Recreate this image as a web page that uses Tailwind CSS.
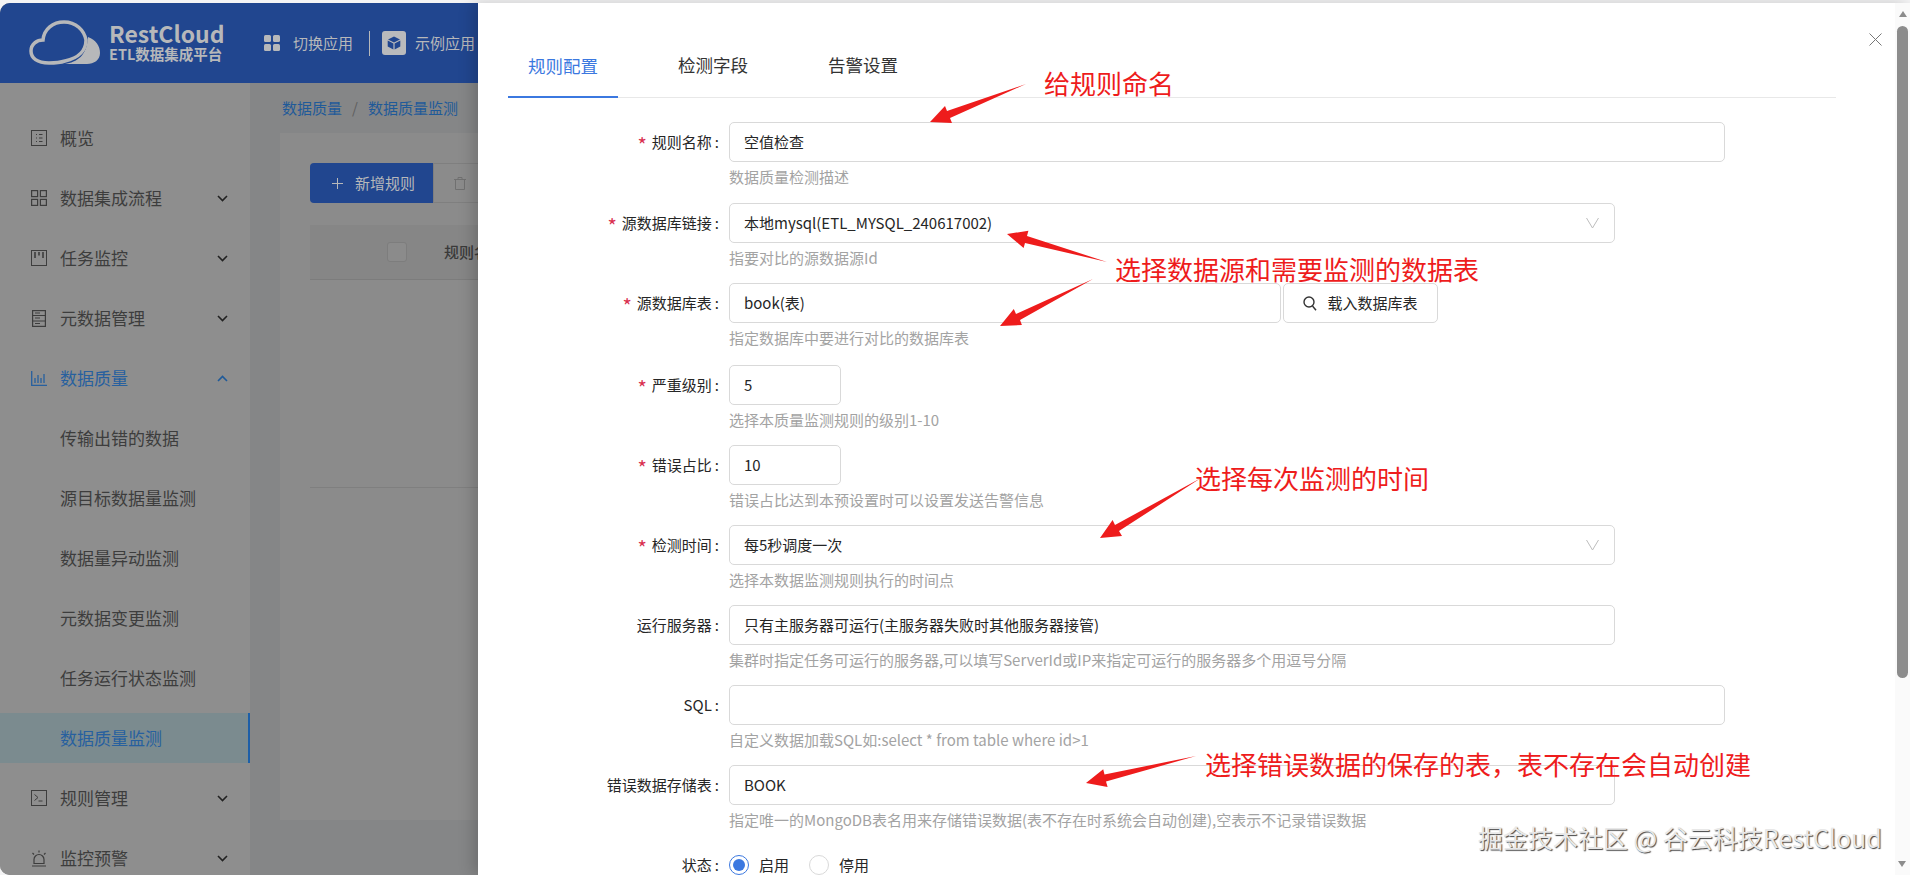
<!DOCTYPE html>
<html lang="zh-CN">
<head>
    <meta charset="UTF-8">
    <title>RestCloud ETL 数据质量监测</title>
    <script src="https://cdn.jsdelivr.net/npm/@tailwindcss/browser@4"></script>
</head>
<body class="bg-white font-['Noto_Sans_CJK_SC','Noto_Sans',sans-serif] overflow-hidden">
<div class="relative w-[1910px] h-[875px] overflow-hidden bg-[#f4f4f5] pt-[3px]">

    <!-- 背景页面(遮罩下) -->
    <div class="h-[872px] flex flex-col rounded-tl-[10px] rounded-bl-[10px] overflow-hidden bg-[#858687]">
        <header class="h-[80px] shrink-0 bg-[#21468f] flex items-center text-[#b7b8ba]">
            <svg class="ml-[29px] w-[72px] h-[46px]" viewBox="0 0 72 46" fill="none">
                <path d="M20 43C8 43 2 38 2 31C2 24 8 20 14 20C15 9 24 2 35 2C47 2 55 10 57 20C57 30 50 38 36 41C30 43 25 43 20 43Z" stroke="#b7b8ba" stroke-width="3.5"/>
                <path d="M59 17C67 20 71 26 71 33C71 40 65 44 58 44L36 44C48 42 58 36 59 17Z" fill="#b7b8ba"/>
            </svg>
            <div class="ml-[8px] w-[120px] -mt-[2px] font-bold">
                <div class="text-[23px] leading-[22px]">RestCloud</div>
                <div class="text-[14.5px] leading-[16px] mt-[2px] whitespace-nowrap">ETL数据集成平台</div>
            </div>
            <svg class="ml-[35px] w-[16px] h-[16px]" viewBox="0 0 16 16" fill="#b7b8ba">
                <rect x="0" y="0" width="7" height="7" rx="1.5"/><rect x="9" y="0" width="7" height="7" rx="1.5"/>
                <rect x="0" y="9" width="7" height="7" rx="1.5"/><rect x="9" y="9" width="7" height="7" rx="1.5"/>
            </svg>
            <span class="ml-[13px] text-[15px]">切换应用</span>
            <div class="ml-[16px] w-px h-[25px] bg-[#b7b8ba]"></div>
            <div class="ml-[12px] w-[24px] h-[24px] rounded-[3px] bg-[#b9babc] flex items-center justify-center">
                <svg class="w-[14px] h-[14px]" viewBox="0 0 14 14" fill="#21468f">
                    <path d="M7 0.5L13 3.5L7 6.5L1 3.5Z"/><path d="M0.7 4.6L6.4 7.4V13.5L0.7 10.6Z"/><path d="M13.3 4.6L7.6 7.4V13.5L13.3 10.6Z"/>
                </svg>
            </div>
            <span class="ml-[9px] text-[15px]">示例应用</span>
        </header>

        <div class="flex-1 flex min-h-0">
            <aside class="w-[250px] shrink-0 bg-[#8e8e8e] pt-[30px] text-[17px] text-[#3d3d3d]">
                <div class="h-[50px] mb-[10px] flex items-center pl-[31px]">
                    <svg class="w-[16px] h-[16px] mr-[13px]" viewBox="0 0 16 16" fill="none" stroke="#3d3d3d"><rect x=".5" y=".5" width="15" height="15"/><path d="M5 4.5h1M5 8h1M5 11.5h1M8 4.5h3.5M8 8h3.5M8 11.5h3.5"/></svg>概览
                </div>
                <div class="h-[50px] mb-[10px] flex items-center pl-[31px]">
                    <svg class="w-[16px] h-[16px] mr-[13px]" viewBox="0 0 16 16" fill="none" stroke="#3d3d3d" stroke-width="1.2"><rect x=".6" y=".6" width="6" height="6"/><rect x="9.4" y=".6" width="6" height="6"/><rect x=".6" y="9.4" width="6" height="6"/><rect x="9.4" y="9.4" width="6" height="6"/></svg>数据集成流程
                    <svg class="ml-auto mr-[22px] w-[11px] h-[7px]" viewBox="0 0 11 7" fill="none" stroke="#222" stroke-width="1.6"><path d="M1 1l4.5 4.5L10 1"/></svg>
                </div>
                <div class="h-[50px] mb-[10px] flex items-center pl-[31px]">
                    <svg class="w-[16px] h-[16px] mr-[13px]" viewBox="0 0 16 16" fill="none" stroke="#3d3d3d"><rect x=".5" y=".5" width="15" height="15"/><path d="M4 2v6M8 2v3.5M12 2v6" stroke-width="1.6"/></svg>任务监控
                    <svg class="ml-auto mr-[22px] w-[11px] h-[7px]" viewBox="0 0 11 7" fill="none" stroke="#222" stroke-width="1.6"><path d="M1 1l4.5 4.5L10 1"/></svg>
                </div>
                <div class="h-[50px] mb-[10px] flex items-center pl-[31px]">
                    <svg class="w-[16px] h-[17px] mr-[13px]" viewBox="0 0 16 17" fill="none" stroke="#3d3d3d" stroke-width="1.2"><rect x="1.6" y=".6" width="12.8" height="15.8"/><path d="M1.6 5.5h12.8M1.6 11h12.8M4 3h5M4 8h5M4 13.5h5"/></svg>元数据管理
                    <svg class="ml-auto mr-[22px] w-[11px] h-[7px]" viewBox="0 0 11 7" fill="none" stroke="#222" stroke-width="1.6"><path d="M1 1l4.5 4.5L10 1"/></svg>
                </div>
                <div class="h-[50px] mb-[10px] flex items-center pl-[31px] text-[#27609f]">
                    <svg class="w-[16px] h-[16px] mr-[13px]" viewBox="0 0 16 16" fill="none" stroke="#27609f" stroke-width="1.3"><path d="M.7 1v14.3H16M4 13V8M7 13V5M10 13V8M13 13V4"/></svg>数据质量
                    <svg class="ml-auto mr-[22px] w-[11px] h-[7px]" viewBox="0 0 11 7" fill="none" stroke="#1f5a99" stroke-width="1.6"><path d="M1 6l4.5-4.5L10 6"/></svg>
                </div>
                <div class="h-[50px] mb-[10px] flex items-center pl-[60px]">传输出错的数据</div>
                <div class="h-[50px] mb-[10px] flex items-center pl-[60px]">源目标数据量监测</div>
                <div class="h-[50px] mb-[10px] flex items-center pl-[60px]">数据量异动监测</div>
                <div class="h-[50px] mb-[10px] flex items-center pl-[60px]">元数据变更监测</div>
                <div class="h-[50px] mb-[10px] flex items-center pl-[60px]">任务运行状态监测</div>
                <div class="h-[50px] mb-[10px] flex items-center pl-[60px] bg-[#7b8b8f] text-[#27609f] border-r-[2px] border-[#1c5fa8]">数据质量监测</div>
                <div class="h-[50px] mb-[10px] flex items-center pl-[31px]">
                    <svg class="w-[16px] h-[16px] mr-[13px]" viewBox="0 0 16 16" fill="none" stroke="#3d3d3d"><rect x=".5" y=".5" width="15" height="15"/><path d="M3.5 4.5L7 7.5L3.5 10.5M7.5 11h4"/></svg>规则管理
                    <svg class="ml-auto mr-[22px] w-[11px] h-[7px]" viewBox="0 0 11 7" fill="none" stroke="#222" stroke-width="1.6"><path d="M1 1l4.5 4.5L10 1"/></svg>
                </div>
                <div class="h-[50px] flex items-center pl-[31px]">
                    <svg class="w-[16px] h-[17px] mr-[13px]" viewBox="0 0 16 17" fill="none" stroke="#3d3d3d" stroke-width="1.2"><path d="M3 14V9.5a5 5 0 0 1 10 0V14M1 16h14M3 13.5h10M8 .5v2M1.5 3l1.5 1.5M14.5 3L13 4.5"/></svg>监控预警
                    <svg class="ml-auto mr-[22px] w-[11px] h-[7px]" viewBox="0 0 11 7" fill="none" stroke="#222" stroke-width="1.6"><path d="M1 1l4.5 4.5L10 1"/></svg>
                </div>
            </aside>

            <main class="flex-1 min-w-0 pl-[30px]">
                <div class="h-[50px] flex items-center pl-[2px] text-[15px] text-[#1f5a99] whitespace-nowrap">
                    数据质量<span class="mx-[10px] text-[#5f5f5f]">/</span>数据质量监测
                </div>
                <section class="h-[687px] bg-[#8b8b8b] pl-[30px] pt-[30px]">
                    <div class="flex h-[40px] whitespace-nowrap">
                        <div class="w-[123px] shrink-0 rounded-l-[4px] bg-[#21468f] text-[#b7b8ba] text-[15px] flex items-center pl-[22px]">
                            <svg class="w-[11px] h-[11px] mr-[12px]" viewBox="0 0 11 11" stroke="#b7b8ba" fill="none"><path d="M5.5 0v11M0 5.5h11"/></svg>新增规则
                        </div>
                        <div class="w-[200px] shrink-0 border border-[#7f7f7f] flex items-center pl-[20px]">
                            <svg class="w-[12px] h-[13px]" viewBox="0 0 12 13" fill="none" stroke="#707070"><path d="M0 2.5h12M4 2.5V.5h4v2M1.5 2.5v10h9v-10"/></svg>
                        </div>
                    </div>
                    <div class="mt-[22px] h-[55px] border-b border-[#7c7c7c] bg-[#868686] flex items-center pl-[77px] text-[15px] text-[#3a3a3a] whitespace-nowrap overflow-hidden">
                        <div class="w-[20px] h-[20px] shrink-0 rounded-[3px] border border-[#7d7d7d] bg-[#8b8b8b]"></div>
                        <span class="ml-[37px] font-medium">规则名称</span>
                    </div>
                    <div class="h-[208px] border-b border-[#7f7f7f]"></div>
                </section>
            </main>
        </div>
    </div>

    <!-- 抽屉 -->
    <div class="absolute left-[478px] right-0 top-[3px] bottom-0 bg-white shadow-[-5px_0_14px_rgba(0,0,0,0.18)] text-[15px] text-[#262626]">
        <div class="ml-[30px] mr-[74px] h-[95px] flex items-end border-b border-[#e8e8e8] text-[17.5px] text-[#333]">
            <div class="w-[110px] h-[95px] pt-[49px] text-center leading-[28px] text-[#3b78e0] border-b-[2px] border-[#3b78e0] -mb-px">规则配置</div>
            <div class="ml-[40px] w-[110px] h-[95px] pt-[49px] text-center leading-[28px]">检测字段</div>
            <div class="ml-[40px] w-[110px] h-[95px] pt-[49px] text-center leading-[28px]">告警设置</div>
        </div>

        <div class="pt-[24px]">
            <div class="flex h-[81px]">
                <div class="w-[241px] h-[40px] flex items-center justify-end"><span class="text-[#d9304f] text-[20px] translate-y-[3px] mr-[5px]">*</span>规则名称<span class="ml-[3px]">:</span></div>
                <div class="ml-[10px]">
                    <div class="w-[996px] h-[40px] border border-[#d9d9d9] rounded-[5px] flex items-center pl-[14px]">空值检查</div>
                    <div class="leading-[30px] text-[#a3a3a3]">数据质量检测描述</div>
                </div>
            </div>
            <div class="flex h-[80px]">
                <div class="w-[241px] h-[40px] flex items-center justify-end"><span class="text-[#d9304f] text-[20px] translate-y-[3px] mr-[5px]">*</span>源数据库链接<span class="ml-[3px]">:</span></div>
                <div class="ml-[10px]">
                    <div class="w-[886px] h-[40px] border border-[#d9d9d9] rounded-[5px] flex items-center pl-[14px] pr-[15px]">本地mysql(ETL_MYSQL_240617002)
                        <svg class="ml-auto w-[13px] h-[12px]" viewBox="0 0 13 12" fill="none" stroke="#bdbdbd"><path d="M.5 1L6.5 11L12.5 1"/></svg>
                    </div>
                    <div class="leading-[30px] text-[#a3a3a3]">指要对比的源数据源Id</div>
                </div>
            </div>
            <div class="flex h-[82px]">
                <div class="w-[241px] h-[40px] flex items-center justify-end"><span class="text-[#d9304f] text-[20px] translate-y-[3px] mr-[5px]">*</span>源数据库表<span class="ml-[3px]">:</span></div>
                <div class="ml-[10px]">
                    <div class="flex">
                        <div class="w-[552px] h-[40px] border border-[#d9d9d9] rounded-[5px] flex items-center pl-[14px]">book(表)</div>
                        <div class="ml-[2px] w-[155px] h-[40px] border border-[#d9d9d9] rounded-[5px] flex items-center justify-center text-[15px]">
                            <svg class="w-[14px] h-[15px] mr-[10px]" viewBox="0 0 14 15" fill="none" stroke="#333" stroke-width="1.4"><circle cx="6" cy="6" r="5"/><path d="M9.5 10L13 14.3"/></svg>载入数据库表
                        </div>
                    </div>
                    <div class="leading-[30px] text-[#a3a3a3]">指定数据库中要进行对比的数据库表</div>
                </div>
            </div>
            <div class="flex h-[80px]">
                <div class="w-[241px] h-[40px] flex items-center justify-end"><span class="text-[#d9304f] text-[20px] translate-y-[3px] mr-[5px]">*</span>严重级别<span class="ml-[3px]">:</span></div>
                <div class="ml-[10px]">
                    <div class="w-[112px] h-[40px] border border-[#d9d9d9] rounded-[5px] flex items-center pl-[14px]">5</div>
                    <div class="leading-[30px] text-[#a3a3a3]">选择本质量监测规则的级别1-10</div>
                </div>
            </div>
            <div class="flex h-[80px]">
                <div class="w-[241px] h-[40px] flex items-center justify-end"><span class="text-[#d9304f] text-[20px] translate-y-[3px] mr-[5px]">*</span>错误占比<span class="ml-[3px]">:</span></div>
                <div class="ml-[10px]">
                    <div class="w-[112px] h-[40px] border border-[#d9d9d9] rounded-[5px] flex items-center pl-[14px]">10</div>
                    <div class="leading-[30px] text-[#a3a3a3]">错误占比达到本预设置时可以设置发送告警信息</div>
                </div>
            </div>
            <div class="flex h-[80px]">
                <div class="w-[241px] h-[40px] flex items-center justify-end"><span class="text-[#d9304f] text-[20px] translate-y-[3px] mr-[5px]">*</span>检测时间<span class="ml-[3px]">:</span></div>
                <div class="ml-[10px]">
                    <div class="w-[886px] h-[40px] border border-[#d9d9d9] rounded-[5px] flex items-center pl-[14px] pr-[15px]">每5秒调度一次
                        <svg class="ml-auto w-[13px] h-[12px]" viewBox="0 0 13 12" fill="none" stroke="#bdbdbd"><path d="M.5 1L6.5 11L12.5 1"/></svg>
                    </div>
                    <div class="leading-[30px] text-[#a3a3a3]">选择本数据监测规则执行的时间点</div>
                </div>
            </div>
            <div class="flex h-[80px]">
                <div class="w-[241px] h-[40px] flex items-center justify-end">运行服务器<span class="ml-[3px]">:</span></div>
                <div class="ml-[10px]">
                    <div class="w-[886px] h-[40px] border border-[#d9d9d9] rounded-[5px] flex items-center pl-[14px]">只有主服务器可运行(主服务器失败时其他服务器接管)</div>
                    <div class="leading-[30px] text-[#a3a3a3]">集群时指定任务可运行的服务器,可以填写ServerId或IP来指定可运行的服务器多个用逗号分隔</div>
                </div>
            </div>
            <div class="flex h-[80px]">
                <div class="w-[241px] h-[40px] flex items-center justify-end">SQL<span class="ml-[3px]">:</span></div>
                <div class="ml-[10px]">
                    <div class="w-[996px] h-[40px] border border-[#d9d9d9] rounded-[5px]"></div>
                    <div class="leading-[30px] text-[#a3a3a3]">自定义数据加载SQL如:select * from table where id&gt;1</div>
                </div>
            </div>
            <div class="flex h-[90px]">
                <div class="w-[241px] h-[40px] flex items-center justify-end">错误数据存储表<span class="ml-[3px]">:</span></div>
                <div class="ml-[10px]">
                    <div class="w-[886px] h-[40px] border border-[#d9d9d9] rounded-[5px] flex items-center pl-[14px]">BOOK</div>
                    <div class="leading-[30px] text-[#a3a3a3]">指定唯一的MongoDB表名用来存储错误数据(表不存在时系统会自动创建),空表示不记录错误数据</div>
                </div>
            </div>
            <div class="flex h-[20px] items-center">
                <div class="w-[241px] flex items-center justify-end">状态<span class="ml-[3px]">:</span></div>
                <div class="ml-[10px] flex items-center">
                    <span class="w-[20px] h-[20px] rounded-full border border-[#3b78e0] flex items-center justify-center"><span class="w-[12px] h-[12px] rounded-full bg-[#3b78e0]"></span></span>
                    <span class="ml-[10px]">启用</span>
                    <span class="ml-[20px] w-[20px] h-[20px] rounded-full border border-[#d9d9d9]"></span>
                    <span class="ml-[10px]">停用</span>
                </div>
            </div>
        </div>

        <!-- 关闭按钮 -->
        <svg class="absolute left-[1391px] top-[30px] w-[13px] h-[13px]" viewBox="0 0 13 13" stroke="#777" fill="none"><path d="M.5.5l12 12M12.5.5l-12 12"/></svg>

        <!-- 滚动条 -->
        <div class="absolute right-0 top-0 bottom-0 w-[15px] bg-[#fafafa]">
            <div class="mx-auto mt-[8px] w-0 h-0 border-x-[4px] border-x-transparent border-b-[6px] border-b-[#8c8c8c]"></div>
            <div class="ml-[2px] mt-[9px] w-[11px] h-[652px] rounded-full bg-[#8c8c8c]"></div>
            <div class="absolute left-[3px] bottom-[8px] w-0 h-0 border-x-[4px] border-x-transparent border-t-[6px] border-t-[#8c8c8c]"></div>
        </div>
    </div>

    <!-- 截图上的红色标注 -->
    <svg class="absolute left-0 top-0 w-[1910px] h-[875px] pointer-events-none" viewBox="0 0 1910 875" fill="#ee1c1c">
        <polygon points="1026,84 950,118 952,123 930,122 945,106 947,111"/>
        <polygon points="1107,262 1027,236 1028.4,230.8 1007,234 1023.6,248 1025,243"/>
        <polygon points="1093,279 1020,320 1021.9,325 1000,326 1013.8,309 1016,314"/>
        <polygon points="1201,478 1119,531 1122,536 1100,538 1112.6,520 1115,525"/>
        <polygon points="1196,756 1106,781.5 1107.6,786.9 1086,783 1103.2,769.3 1104.5,774.5"/>
    </svg>
    <div class="absolute left-[1044px] top-[64px] text-[26px] leading-[38px] text-[#ee1c1c] whitespace-nowrap">给规则命名</div>
    <div class="absolute left-[1115px] top-[250px] text-[26px] leading-[38px] text-[#ee1c1c] whitespace-nowrap">选择数据源和需要监测的数据表</div>
    <div class="absolute left-[1195px] top-[459px] text-[26px] leading-[38px] text-[#ee1c1c] whitespace-nowrap">选择每次监测的时间</div>
    <div class="absolute left-[1205px] top-[745px] text-[26px] leading-[38px] text-[#ee1c1c] whitespace-nowrap">选择错误数据的保存的表，表不存在会自动创建</div>

    <!-- 水印 -->
    <div class="absolute left-[1478px] top-[819px] text-[25px] leading-[36px] text-[#e8e8e8] whitespace-nowrap [text-shadow:1px_1px_1px_#444]">掘金技术社区 @ 谷云科技RestCloud</div>
</div>
</body>
</html>
